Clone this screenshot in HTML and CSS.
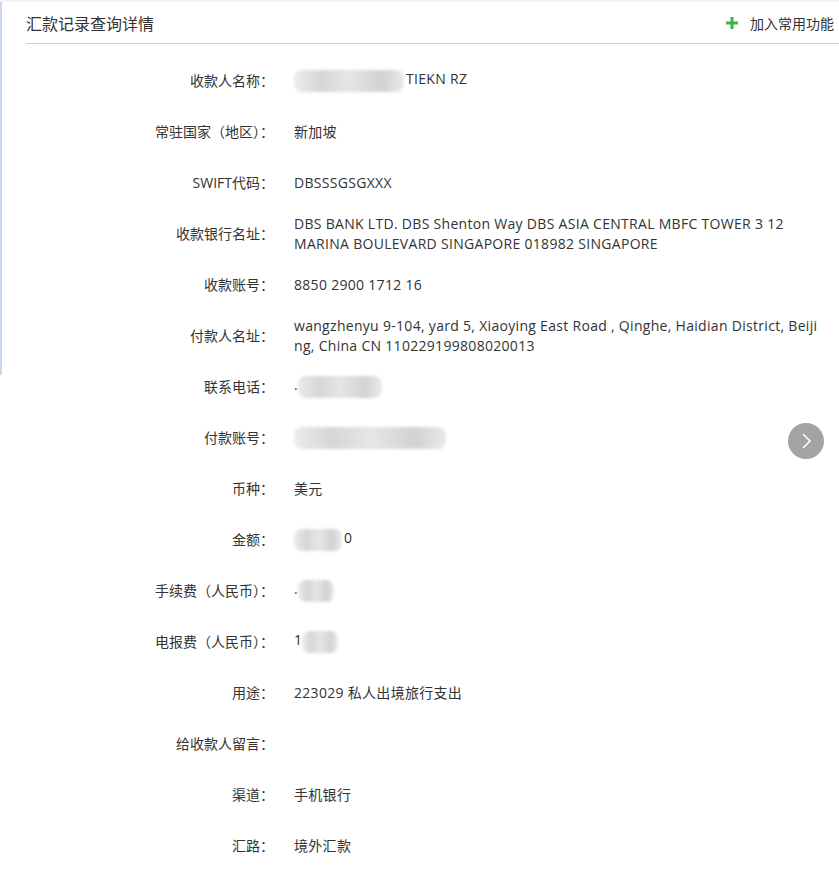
FILE: index.html
```html
<!DOCTYPE html>
<html lang="zh-CN">
<head>
    <meta charset="UTF-8">
    <title>汇款记录查询详情</title>
    <link rel="stylesheet" href="styles.css">
</head>
<body>
    <div class="page">
        <div class="header">
            <h1>汇款记录查询详情</h1>
            <a class="add-fav" href="#">
                <svg width="12" height="12" viewBox="0 0 12 12"><path d="M6 0v12M0 6h12" stroke="#3bb54a" stroke-width="3"/></svg>
                <span>加入常用功能</span>
            </a>
        </div>

        <div class="detail">
            <div class="row">
                <div class="label">收款人名称：</div>
                <div class="value"><span class="blur" style="width:110px"></span>TIEKN RZ</div>
            </div>
            <div class="row">
                <div class="label">常驻国家（地区）：</div>
                <div class="value">新加坡</div>
            </div>
            <div class="row">
                <div class="label">SWIFT代码：</div>
                <div class="value">DBSSSGSGXXX</div>
            </div>
            <div class="row">
                <div class="label">收款银行名址：</div>
                <div class="value">DBS BANK LTD. DBS Shenton Way DBS ASIA CENTRAL MBFC TOWER 3 12<br>MARINA BOULEVARD SINGAPORE 018982 SINGAPORE</div>
            </div>
            <div class="row">
                <div class="label">收款账号：</div>
                <div class="value">8850 2900 1712 16</div>
            </div>
            <div class="row">
                <div class="label">付款人名址：</div>
                <div class="value">wangzhenyu 9-104, yard 5, Xiaoying East Road , Qinghe, Haidian District, Beijing, China CN 110229199808020013</div>
            </div>
            <div class="row">
                <div class="label">联系电话：</div>
                <div class="value">.<span class="blur" style="width:84px"></span></div>
            </div>
            <div class="row">
                <div class="label">付款账号：</div>
                <div class="value"><span class="blur" style="width:152px"></span></div>
            </div>
            <div class="row">
                <div class="label">币种：</div>
                <div class="value">美元</div>
            </div>
            <div class="row">
                <div class="label">金额：</div>
                <div class="value"><span class="blur" style="width:48px"></span>0</div>
            </div>
            <div class="row">
                <div class="label">手续费（人民币）：</div>
                <div class="value">.<span class="blur" style="width:36px"></span></div>
            </div>
            <div class="row">
                <div class="label">电报费（人民币）：</div>
                <div class="value">1<span class="blur" style="width:36px"></span></div>
            </div>
            <div class="row">
                <div class="label">用途：</div>
                <div class="value">223029 私人出境旅行支出</div>
            </div>
            <div class="row">
                <div class="label">给收款人留言：</div>
                <div class="value"></div>
            </div>
            <div class="row">
                <div class="label">渠道：</div>
                <div class="value">手机银行</div>
            </div>
            <div class="row">
                <div class="label">汇路：</div>
                <div class="value">境外汇款</div>
            </div>
        </div>

        <a class="next-btn" href="#">
            <svg width="36" height="36" viewBox="0 0 36 36"><path d="M15 11l7 7-7 7" fill="none" stroke="#fff" stroke-width="1.6"/></svg>
        </a>
    </div>
</body>
</html>
```

FILE: styles.css
```css
html, body {
    margin: 0;
    padding: 0;
    background-color: #ffffff;
    color: #333333;
    font-family: "Open Sans", "Noto Sans CJK SC", sans-serif;
    font-size: 14px;
}

body {
    border-top: 2px solid #f2f2f2;
}

.page {
    position: relative;
    min-height: 867px;
}

/* thin blue rule on the left edge */
.page::before {
    content: "";
    position: absolute;
    left: 0;
    top: 0;
    width: 2px;
    height: 373px;
    background-color: #c9d8ea;
}

.header {
    margin-left: 26px;
    height: 41px;
    border-bottom: 1px solid #c8d0dc;
    display: flex;
    justify-content: space-between;
    align-items: center;
    padding-right: 5px;
}

.header h1 {
    margin: 0;
    font-size: 16px;
    font-weight: normal;
    color: #333333;
}

.add-fav {
    display: flex;
    align-items: center;
    gap: 12px;
    color: #333333;
    text-decoration: none;
    font-size: 14px;
}

.detail {
    padding-top: 11px;
}

.row {
    display: flex;
    align-items: center;
    height: 51px;
    line-height: 20px;
}

.label {
    width: 274px;
    flex-shrink: 0;
    text-align: right;
}

.value {
    margin-left: 20px;
    width: 528px;
    letter-spacing: 0.3px;
    word-break: break-all;
}

.blur {
    display: inline-block;
    vertical-align: middle;
    height: 22px;
    margin-right: 2px;
    background: linear-gradient(90deg, #ececec, #d6d6d6 25%, #e6e6e6 50%, #d2d2d2 80%, #eaeaea);
    filter: blur(1.5px);
    border-radius: 8px;
}

.next-btn {
    position: absolute;
    left: 788px;
    top: 421px;
    width: 36px;
    height: 36px;
    border-radius: 50%;
    background-color: #a3a3a3;
    display: flex;
}
```
